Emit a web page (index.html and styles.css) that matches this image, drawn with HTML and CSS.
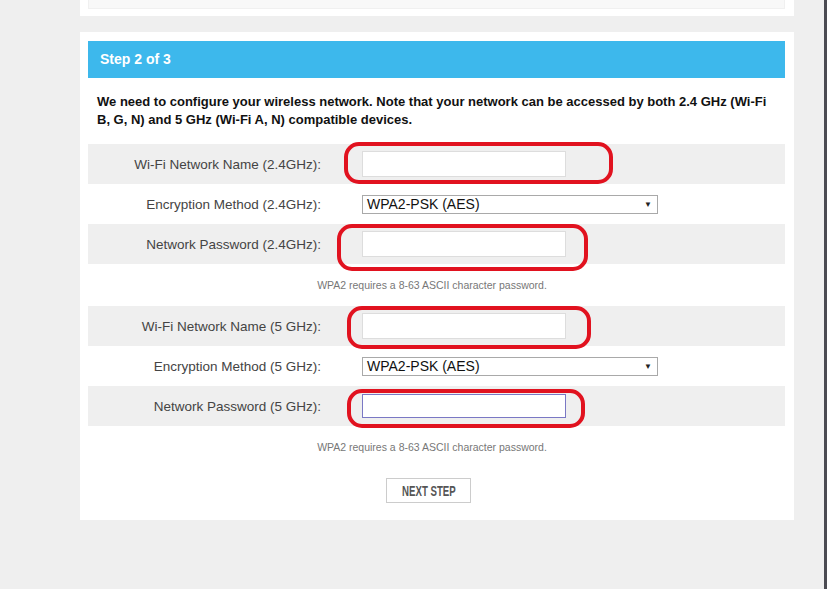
FILE: index.html
```html
<!DOCTYPE html>
<html>
<head>
    <title>Wireless Setup - Step 2 of 3</title>
    <link rel="stylesheet" href="styles.css">
</head>
<body>
    <div class="page">
        <!-- sisa kartu sebelumnya -->
        <div class="card card-top">
            <div class="card-top-inner"></div>
        </div>

        <div class="card card-main">
            <div class="step-header">Step 2 of 3</div>
            <p class="intro">We need to configure your wireless network. Note that your network can be accessed by both 2.4 GHz (Wi-Fi B, G, N) and 5 GHz (Wi-Fi A, N) compatible devices.</p>

            <div class="row shade">
                <label class="label">Wi-Fi Network Name (2.4GHz):</label>
                <div class="field"><input class="text-input" type="text"></div>
            </div>
            <div class="row">
                <label class="label">Encryption Method (2.4GHz):</label>
                <div class="field">
                    <div class="select"><span>WPA2-PSK (AES)</span><span class="arrow">&#9660;</span></div>
                </div>
            </div>
            <div class="row shade">
                <label class="label">Network Password (2.4GHz):</label>
                <div class="field"><input class="text-input" type="text"></div>
            </div>
            <p class="hint">WPA2 requires a 8-63 ASCII character password.</p>

            <div class="row shade">
                <label class="label">Wi-Fi Network Name (5 GHz):</label>
                <div class="field"><input class="text-input" type="text"></div>
            </div>
            <div class="row">
                <label class="label">Encryption Method (5 GHz):</label>
                <div class="field">
                    <div class="select"><span>WPA2-PSK (AES)</span><span class="arrow">&#9660;</span></div>
                </div>
            </div>
            <div class="row shade">
                <label class="label">Network Password (5 GHz):</label>
                <div class="field"><input class="text-input focused" type="text"></div>
            </div>
            <p class="hint">WPA2 requires a 8-63 ASCII character password.</p>

            <div class="actions">
                <button class="next-btn"><span class="next-text">NEXT STEP</span></button>
            </div>

            <!-- tanda merah di atas kolom -->
            <div class="mark mark-1"></div>
            <div class="mark mark-2"></div>
            <div class="mark mark-3"></div>
            <div class="mark mark-4"></div>
        </div>
    </div>
    <div class="edge"></div>
</body>
</html>
```

FILE: styles.css
```css
body {
    margin: 0;
    background-color: #efefef;
    font-family: "Liberation Sans", Arial, sans-serif;
    display: flex;
    height: 589px;
    overflow: hidden;
}
.page {
    width: 744px;
    padding-left: 80px;
}
.edge {
    width: 3px;
    background-color: #4b4b52;
}
.card {
    width: 714px;
    background-color: #ffffff;
    box-sizing: border-box;
}
.card-top {
    height: 16px;
    padding: 0 9px 0 8px;
    margin-bottom: 16px;
}
.card-top-inner {
    height: 8px;
    background-color: #f8f8f8;
    border: 1px solid #f0f0f0;
    border-top: none;
}
.card-main {
    position: relative;
    padding: 9px 9px 17px 8px;
}
.step-header {
    height: 37px;
    background-color: #3db8ec;
    color: #ffffff;
    font-weight: bold;
    font-size: 14px;
    line-height: 37px;
    padding-left: 12px;
}
.intro {
    margin: 15px 12px 15px 9px;
    font-size: 13px;
    font-weight: bold;
    line-height: 18px;
    color: #111111;
}
.row {
    display: grid;
    grid-template-columns: 233px 1fr;
    column-gap: 41px;
    align-items: center;
    height: 40px;
}
.row.shade {
    background-color: #efefef;
}
.label {
    text-align: right;
    font-size: 13.5px;
    color: #444444;
}
.field {
    display: flex;
    align-items: center;
}
.text-input {
    width: 204px;
    height: 26px;
    box-sizing: border-box;
    border: 1px solid #dddddd;
    background-color: #ffffff;
    margin: 0;
    padding: 0 4px;
}
.text-input.focused {
    border: 1px solid #7a78c4;
    height: 24px;
}
.select {
    width: 296px;
    height: 19px;
    box-sizing: border-box;
    border: 1px solid #a9a9a9;
    background-color: #ffffff;
    display: flex;
    justify-content: space-between;
    align-items: center;
    padding: 0 5px 0 4px;
    font-size: 14px;
    color: #111111;
}
.arrow {
    font-size: 8px;
    color: #222222;
}
.hint {
    margin: 0;
    height: 42px;
    line-height: 42px;
    text-align: center;
    font-size: 10.5px;
    color: #777777;
    padding-right: 9px;
}
.actions {
    display: flex;
    justify-content: center;
    padding: 10px 16px 0 0;
}
.next-btn {
    width: 85px;
    height: 25px;
    background-color: #ffffff;
    border: 1px solid #cccccc;
    font-family: "Liberation Sans", Arial, sans-serif;
    font-weight: bold;
    font-size: 14px;
    color: #555555;
    padding: 0;
}
.next-text {
    display: inline-block;
    transform: scaleX(0.69);
}
.mark {
    position: absolute;
    border: 4px solid #e1121f;
    border-radius: 15px;
    box-sizing: border-box;
}
.mark-1 {
    left: 264px;
    top: 110px;
    width: 269px;
    height: 42px;
}
.mark-2 {
    left: 257px;
    top: 192px;
    width: 251px;
    height: 47px;
}
.mark-3 {
    left: 267px;
    top: 274px;
    width: 244px;
    height: 43px;
}
.mark-4 {
    left: 267px;
    top: 357px;
    width: 238px;
    height: 39px;
}
```
